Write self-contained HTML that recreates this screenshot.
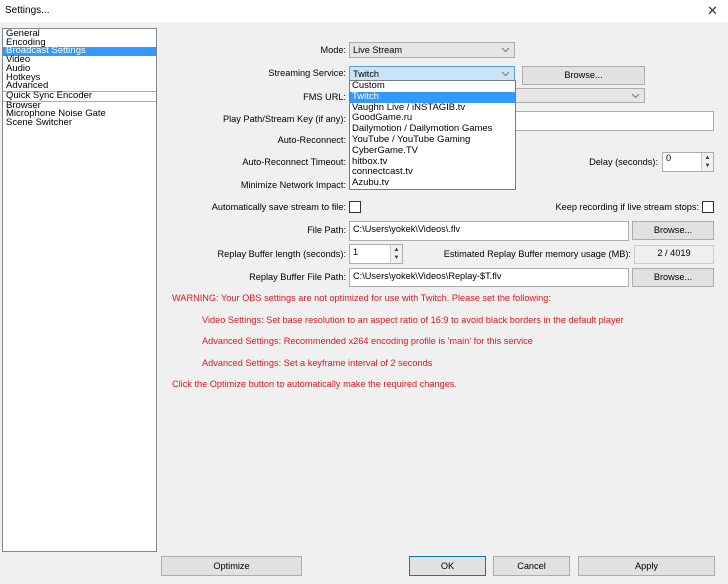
<!DOCTYPE html>
<html><head><meta charset="utf-8"><style>
*{box-sizing:border-box;margin:0;padding:0}
body{width:728px;height:584px;background:#f0f0f0;font-family:"Liberation Sans",sans-serif;font-size:9.2px;color:#000;position:relative;overflow:hidden}
.a{position:absolute;white-space:nowrap}
.lbl{position:absolute;right:382px;white-space:nowrap;line-height:12px}
.inp{position:absolute;background:#fff;border:1px solid #adadad;padding:0 3px;display:flex;align-items:center}
.cmb{position:absolute;background:#e5e5e5;border:1px solid #acacac;padding:0 3px;display:flex;align-items:center}
.btn{position:absolute;background:#e1e1e1;border:1px solid #adadad;text-align:center}
.chev{position:absolute;right:5px;top:50%;margin-top:-2px;width:7px;height:4px}
.red{position:absolute;color:#e0161b;white-space:nowrap;line-height:12px}
.cb{position:absolute;width:12px;height:12px;background:#fff;border:1px solid #333}
.spin{position:absolute;right:0;top:0;bottom:0;width:12px;border-left:1px solid #ccc;background:#f0f0f0;font-size:6px;text-align:center;line-height:8px;color:#333;padding-top:1px}
</style></head><body>
<div class="a" style="left:0;top:0;width:728px;height:22px;background:#fff"></div>
<div class="a" style="left:5px;top:5px;font-size:10px">Settings...</div>
<div class="a" style="left:707px;top:3px;font-size:13px;color:#333">✕</div>

<div class="a" style="left:2px;top:28px;width:155px;height:524px;background:#fff;border:1px solid #828790;line-height:8.7px;font-size:9.5px;padding-top:1px">
<div style="padding-left:3px">General</div>
<div style="padding-left:3px">Encoding</div>
<div style="padding-left:3px;background:#3399ff;color:#fff">Broadcast Settings</div>
<div style="padding-left:3px">Video</div>
<div style="padding-left:3px">Audio</div>
<div style="padding-left:3px">Hotkeys</div>
<div style="padding-left:3px;border-bottom:1px solid #aaa">Advanced</div>
<div style="padding-left:3px;border-bottom:1px solid #aaa">Quick Sync Encoder</div>
<div style="padding-left:3px">Browser</div>
<div style="padding-left:3px">Microphone Noise Gate</div>
<div style="padding-left:3px">Scene Switcher</div>
</div>

<div class="lbl" style="top:44px">Mode:</div>
<div class="cmb" style="left:349px;top:42px;width:166px;height:16px">Live Stream<svg class="chev" viewBox="0 0 7 4"><path d="M0 0L3.5 3.5L7 0" fill="none" stroke="#777"/></svg></div>
<div class="lbl" style="top:67px">Streaming Service:</div>
<div class="cmb" style="left:349px;top:66px;width:166px;height:15px;background:#cce4f7;border-color:#569de5">Twitch<svg class="chev" viewBox="0 0 7 4"><path d="M0 0L3.5 3.5L7 0" fill="none" stroke="#777"/></svg></div>
<div class="btn" style="left:522px;top:66px;width:123px;height:19px;line-height:17px">Browse...</div>
<div class="lbl" style="top:91px">FMS URL:</div>
<div class="cmb" style="left:349px;top:88px;width:296px;height:15px"><svg class="chev" viewBox="0 0 7 4"><path d="M0 0L3.5 3.5L7 0" fill="none" stroke="#777"/></svg></div>
<div class="lbl" style="top:113px">Play Path/Stream Key (if any):</div>
<div class="inp" style="left:349px;top:111px;width:365px;height:20px"></div>
<div class="lbl" style="top:134px">Auto-Reconnect:</div>
<div class="lbl" style="top:156px">Auto-Reconnect Timeout:</div>
<div class="lbl" style="top:179px">Minimize Network Impact:</div>
<div class="lbl" style="top:201px">Automatically save stream to file:</div>
<div class="cb" style="left:349px;top:201px"></div>
<div class="a" style="right:29px;top:201px;line-height:12px">Keep recording if live stream stops:</div>
<div class="cb" style="left:702px;top:201px"></div>
<div class="a" style="right:70px;top:156px;line-height:12px">Delay (seconds):</div>
<div class="inp" style="left:662px;top:152px;width:52px;height:20px;align-items:flex-start">0<div class="spin">▲<br>▼</div></div>

<div class="lbl" style="top:224px">File Path:</div>
<div class="inp" style="left:349px;top:221px;width:280px;height:20px;align-items:flex-start;padding-top:2px">C:\Users\yokek\Videos\.flv</div>
<div class="btn" style="left:632px;top:221px;width:82px;height:19px;line-height:17px">Browse...</div>
<div class="lbl" style="top:248px">Replay Buffer length (seconds):</div>
<div class="inp" style="left:349px;top:244px;width:54px;height:20px;align-items:flex-start;padding-top:2px">1<div class="spin">▲<br>▼</div></div>
<div class="a" style="right:97px;top:248px;line-height:12px">Estimated Replay Buffer memory usage (MB):</div>
<div class="a" style="left:634px;top:245px;width:80px;height:19px;border:1px solid #ccc;text-align:center;line-height:15px">2 / 4019</div>
<div class="lbl" style="top:271px">Replay Buffer File Path:</div>
<div class="inp" style="left:349px;top:268px;width:280px;height:19px;align-items:flex-start;padding-top:2px">C:\Users\yokek\Videos\Replay-$T.flv</div>
<div class="btn" style="left:632px;top:268px;width:82px;height:19px;line-height:17px">Browse...</div>

<div class="red" style="left:172px;top:292px">WARNING: Your OBS settings are not optimized for use with Twitch. Please set the following:</div>
<div class="red" style="left:202px;top:314px">Video Settings: Set base resolution to an aspect ratio of 16:9 to avoid black borders in the default player</div>
<div class="red" style="left:202px;top:335px">Advanced Settings: Recommended x264 encoding profile is 'main' for this service</div>
<div class="red" style="left:202px;top:357px">Advanced Settings: Set a keyframe interval of 2 seconds</div>
<div class="red" style="left:172px;top:378px">Click the Optimize button to automatically make the required changes.</div>

<div class="a" style="left:349px;top:80px;width:167px;height:110px;background:#fff;border:1px solid #7a7a7a;line-height:10.8px;font-size:9.5px">
<div style="padding-left:2px">Custom</div>
<div style="padding-left:2px;background:#3399ff;color:#fff">Twitch</div>
<div style="padding-left:2px">Vaughn Live / iNSTAGIB.tv</div>
<div style="padding-left:2px">GoodGame.ru</div>
<div style="padding-left:2px">Dailymotion / Dailymotion Games</div>
<div style="padding-left:2px">YouTube / YouTube Gaming</div>
<div style="padding-left:2px">CyberGame.TV</div>
<div style="padding-left:2px">hitbox.tv</div>
<div style="padding-left:2px">connectcast.tv</div>
<div style="padding-left:2px">Azubu.tv</div>
</div>

<div class="btn" style="left:161px;top:556px;width:141px;height:20px;line-height:18px">Optimize</div>
<div class="btn" style="left:409px;top:556px;width:77px;height:20px;line-height:18px;border-color:#0078d7">OK</div>
<div class="btn" style="left:493px;top:556px;width:77px;height:20px;line-height:18px">Cancel</div>
<div class="btn" style="left:578px;top:556px;width:137px;height:20px;line-height:18px">Apply</div>
</body></html>
